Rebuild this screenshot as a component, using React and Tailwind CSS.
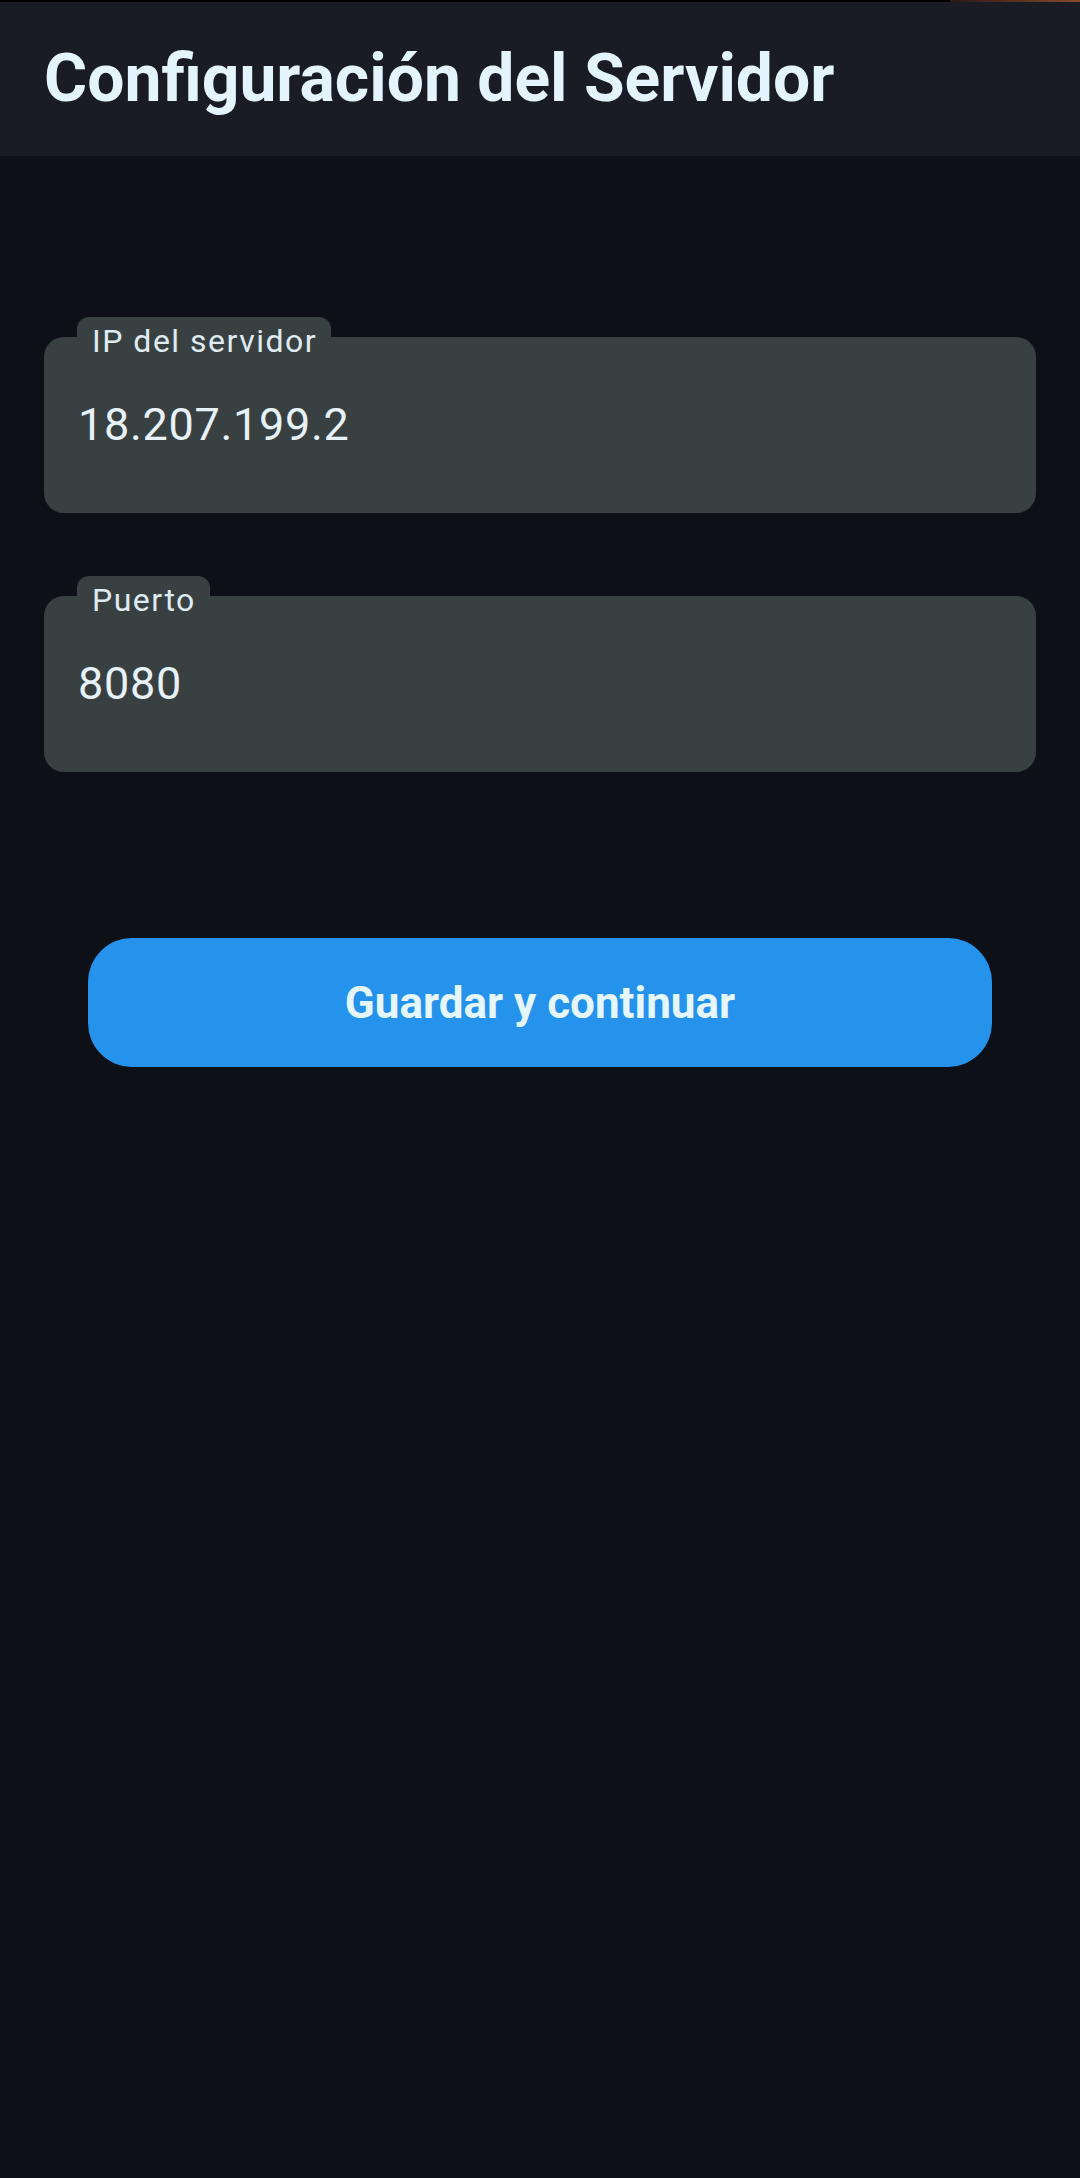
import React from 'react';

function Field({ label, value }) {
  return (
    <div className="relative">
      <div className="h-[176px] flex items-center rounded-[20px] bg-[#394042] pl-[34px] text-[45px] leading-[52px] tracking-[0.7px] text-[#e6f2f8]">
        {value}
      </div>
      <div className="absolute left-[33px] top-[-20px] z-10 h-[44px] rounded-[12px] bg-[#394042] pl-[15px] pr-[14px] pt-[6px] text-[32px] leading-[36px] tracking-[1.5px] text-[#dfebf1]">
        {label}
      </div>
    </div>
  );
}

export default function App() {
  return (
    <div className="min-h-[2178px] bg-[#0e1018]" style={{ fontFamily: 'Roboto, "Noto Sans", sans-serif' }}>
      <div className="h-[2px] bg-gradient-to-r from-black from-[88%] via-[#2a1a14] to-[#8a4a2a]" />
      <header className="flex h-[154px] items-center bg-[#191c25] pl-[44px]">
        <h1 className="text-[66px] font-bold leading-none text-[#e4f4fd]">Configuración del Servidor</h1>
      </header>
      <main className="flex flex-col px-[44px] pt-[181px]">
        <Field label="IP del servidor" value="18.207.199.2" />
        <div className="h-[83px]" />
        <Field label="Puerto" value="8080" />
        <div className="flex justify-center pt-[166px]">
          <button className="flex h-[129px] w-[904px] items-center justify-center rounded-[44px] bg-[#2592ec] text-[44px] font-bold text-[#e6f6fd]">
            Guardar y continuar
          </button>
        </div>
      </main>
    </div>
  );
}
